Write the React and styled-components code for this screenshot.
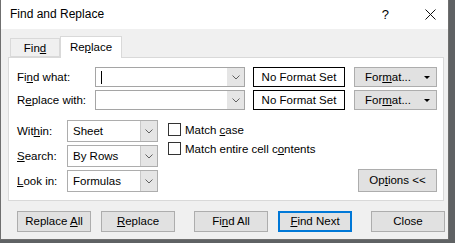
import styled, { createGlobalStyle } from "styled-components";

const GlobalStyle = createGlobalStyle`
  html, body {
    margin: 0;
    padding: 0;
    background: #5f6264;
  }
  * {
    box-sizing: border-box;
  }
`;

function Chevron() {
  return (
    <svg width="8" height="5" viewBox="0 0 8 5">
      <path d="M0.5 0.5 L4 4 L7.5 0.5" fill="none" stroke="#606060" strokeWidth="1" />
    </svg>
  );
}

function Combo({ width, editable, value, cursor }) {
  return (
    <ComboBox width={width} editable={editable}>
      <ComboText>
        {cursor && <Caret />}
        {value}
      </ComboText>
      <ComboArrow editable={editable}>
        <Chevron />
      </ComboArrow>
    </ComboBox>
  );
}

function App() {
  return (
    <Desktop>
      <GlobalStyle />
      <Window>
        <TitleBar>
          <Title>Find and Replace</Title>
          <TitleButtons>
            <Help>?</Help>
            <svg width="11" height="11" viewBox="0 0 11 11">
              <path d="M0.5 0.5 L10.5 10.5 M10.5 0.5 L0.5 10.5" stroke="#111" strokeWidth="1" />
            </svg>
          </TitleButtons>
        </TitleBar>

        <TabRow>
          <Tab>
            Fin<u>d</u>
          </Tab>
          <Tab active>
            Re<u>p</u>lace
          </Tab>
        </TabRow>

        <Panel>
          <FieldRow>
            <Label width={78}>
              Fi<u>n</u>d what:
            </Label>
            <Combo width={150} editable cursor />
            <FormatBox>No Format Set</FormatBox>
            <FormatButton>
              <span>
                For<u>m</u>at...
              </span>
              <DropTriangle />
            </FormatButton>
          </FieldRow>
          <FieldRow>
            <Label width={78}>
              R<u>e</u>place with:
            </Label>
            <Combo width={150} editable />
            <FormatBox>No Format Set</FormatBox>
            <FormatButton>
              <span>
                For<u>m</u>at...
              </span>
              <DropTriangle />
            </FormatButton>
          </FieldRow>

          <Lower>
            <SelectColumn>
              <SelectRow>
                <Label width={50}>
                  Wit<u>h</u>in:
                </Label>
                <Combo width={91} value="Sheet" />
              </SelectRow>
              <SelectRow>
                <Label width={50}>
                  <u>S</u>earch:
                </Label>
                <Combo width={91} value="By Rows" />
              </SelectRow>
              <SelectRow>
                <Label width={50}>
                  <u>L</u>ook in:
                </Label>
                <Combo width={91} value="Formulas" />
              </SelectRow>
            </SelectColumn>

            <CheckColumn>
              <CheckRow>
                <CheckBox />
                <span>
                  Match <u>c</u>ase
                </span>
              </CheckRow>
              <CheckRow>
                <CheckBox />
                <span>
                  Match entire cell c<u>o</u>ntents
                </span>
              </CheckRow>
            </CheckColumn>

            <OptionsButton>
              Op<u>t</u>ions &lt;&lt;
            </OptionsButton>
          </Lower>
        </Panel>

        <ButtonRow>
          <ButtonGroup>
            <Button>
              Replace <u>A</u>ll
            </Button>
            <Button>
              <u>R</u>eplace
            </Button>
          </ButtonGroup>
          <ButtonGroup>
            <Button>
              Fi<u>n</u>d All
            </Button>
            <Button primary>
              <u>F</u>ind Next
            </Button>
          </ButtonGroup>
          <Button>Close</Button>
        </ButtonRow>
      </Window>
    </Desktop>
  );
}

export default App;

const Desktop = styled.div`
  width: 455px;
  height: 243px;
  display: flex;
  align-items: flex-start;
  font-family: "Liberation Sans", Arial, sans-serif;
  font-size: 11.5px;
  color: #000;
`;

const Window = styled.div`
  width: 449px;
  height: 240px;
  background: #f0f0f0;
  border: 1px solid #6f6f6f;
  border-top: none;
  display: flex;
  flex-direction: column;
`;

const TitleBar = styled.div`
  height: 29px;
  background: #ffffff;
  display: flex;
  align-items: center;
  justify-content: space-between;
  padding: 0 12px 1px 9px;
`;

const Title = styled.div`
  font-size: 12px;
`;

const TitleButtons = styled.div`
  display: flex;
  align-items: center;
  gap: 36px;
`;

const Help = styled.span`
  font-size: 13px;
`;

const TabRow = styled.div`
  display: flex;
  align-items: flex-end;
  margin: 7px 0 0 9px;
  height: 21px;
  position: relative;
  z-index: 1;
`;

const Tab = styled.div`
  height: ${({ active }) => (active ? "22px" : "19px")};
  width: ${({ active }) => (active ? "62px" : "50px")};
  margin-bottom: ${({ active }) => (active ? "-1px" : "0")};
  background: ${({ active }) => (active ? "#ffffff" : "#f0f0f0")};
  border: 1px solid #d9d9d9;
  border-bottom: ${({ active }) => (active ? "none" : "1px solid #d9d9d9")};
  text-align: center;
  line-height: ${({ active }) => (active ? "20px" : "18px")};
  white-space: nowrap;
`;

const Panel = styled.div`
  margin-left: 7px;
  width: 436px;
  height: 144px;
  background: #ffffff;
  border: 1px solid #d9d9d9;
  padding: 9px 6px 0 8px;
  display: flex;
  flex-direction: column;
  gap: 3px;
`;

const FieldRow = styled.div`
  display: flex;
  align-items: center;
  height: 20px;
`;

const Label = styled.div`
  width: ${({ width }) => width}px;
  flex-shrink: 0;
  white-space: nowrap;
`;

const ComboBox = styled.div`
  width: ${({ width }) => width}px;
  height: 100%;
  display: flex;
  border: 1px solid ${({ editable }) => (editable ? "#a5a5a5" : "#adadad")};
  background: #ffffff;
  flex-shrink: 0;
`;

const ComboText = styled.div`
  flex: 1;
  display: flex;
  align-items: center;
  padding-left: 5px;
  white-space: nowrap;
`;

const Caret = styled.span`
  width: 1px;
  height: 13px;
  background: #000;
`;

const ComboArrow = styled.div`
  width: 17px;
  background: #e5e5e5;
  border-left: 1px solid ${({ editable }) => (editable ? "#e5e5e5" : "#c8c8c8")};
  display: flex;
  align-items: center;
  justify-content: center;
`;

const FormatBox = styled.div`
  margin-left: 8px;
  width: 92px;
  height: 100%;
  border: 1px solid #000;
  text-align: center;
  line-height: 18px;
  white-space: nowrap;
  flex-shrink: 0;
`;

const FormatButton = styled.div`
  margin-left: 9px;
  width: 83px;
  height: 100%;
  background: #e1e1e1;
  border: 1px solid #adadad;
  display: flex;
  align-items: center;
  justify-content: flex-end;
  padding-right: 6px;
  gap: 13px;
  white-space: nowrap;
  flex-shrink: 0;
`;

const DropTriangle = styled.span`
  width: 0;
  height: 0;
  border-left: 3px solid transparent;
  border-right: 3px solid transparent;
  border-top: 3px solid #000;
`;

const Lower = styled.div`
  margin-top: 7px;
  display: flex;
  align-items: flex-end;
`;

const SelectColumn = styled.div`
  display: flex;
  flex-direction: column;
  gap: 3px;
`;

const SelectRow = styled.div`
  display: flex;
  align-items: center;
  height: 22px;
`;

const CheckColumn = styled.div`
  align-self: flex-start;
  margin-left: 10px;
  padding-top: 3px;
  display: flex;
  flex-direction: column;
  gap: 6px;
  flex: 1;
`;

const CheckRow = styled.div`
  display: flex;
  align-items: center;
  gap: 4px;
  height: 13px;
  white-space: nowrap;
`;

const CheckBox = styled.span`
  width: 13px;
  height: 13px;
  border: 1px solid #333;
  background: #fff;
`;

const OptionsButton = styled.div`
  width: 79px;
  height: 23px;
  background: #e1e1e1;
  border: 1px solid #adadad;
  text-align: center;
  line-height: 21px;
  white-space: nowrap;
`;

const ButtonRow = styled.div`
  display: flex;
  gap: 19px;
  margin: 10px 0 0 16px;
`;

const ButtonGroup = styled.div`
  display: flex;
  gap: 10px;
`;

const Button = styled.div`
  width: 74px;
  height: 21px;
  background: #e1e1e1;
  border: ${({ primary }) => (primary ? "2px solid #0078d7" : "1px solid #adadad")};
  text-align: center;
  line-height: ${({ primary }) => (primary ? "17px" : "19px")};
  white-space: nowrap;
`;
